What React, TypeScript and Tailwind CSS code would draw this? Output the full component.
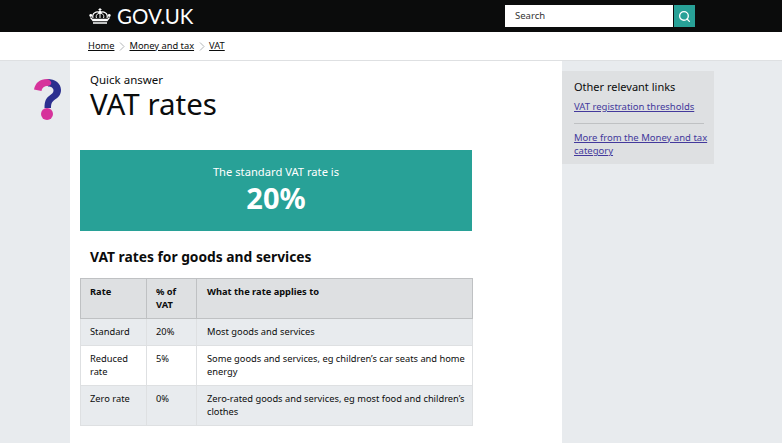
import { Search } from "lucide-react"

const rows = [
  { rate: "Standard", pct: "20%", text: "Most goods and services", shaded: true, h: "h-[27px]" },
  { rate: "Reduced rate", pct: "5%", text: "Some goods and services, eg children’s car seats and home energy", shaded: false, h: "h-[40px]" },
  { rate: "Zero rate", pct: "0%", text: "Zero-rated goods and services, eg most food and children’s clothes", shaded: true, h: "h-[40px]" },
]

function Crown() {
  return (
    <svg width="22" height="16" viewBox="0 0 44 32" fill="none" stroke="white" strokeWidth="2">
      <path d="M22 0v6M19 3h6" strokeWidth="2" />
      <path d="M8 20C5 10 16 5 22 10c6-5 17-0 14 10" strokeWidth="2.400" />
      <path d="M15 20c-2-5 1-9 7-10 6 1 9 5 7 10M22 10v10" strokeWidth="2" />
      <circle cx="3.500" cy="15" r="2.800" fill="white" stroke="none" />
      <circle cx="40.500" cy="15" r="2.800" fill="white" stroke="none" />
      <circle cx="22" cy="8" r="3" fill="white" stroke="none" />
      <path d="M3 19l5 6M41 19l-5 6" strokeWidth="2.400" />
      <path d="M7 21.500h30v5H7z" fill="white" stroke="none" />
      <path d="M8 28.500h28v3H8z" fill="white" stroke="none" />
    </svg>
  )
}

function QuestionMark() {
  return (
    <svg width="27" height="41" viewBox="0 0 27 41">
      <path d="M13 0C21.500 0 27 4.500 27 11c0 5-3 7.500-6 9.500-2.600 1.800-4 3.500-4 8.500h-6.500c0-7 1.600-10 5.200-12.500 2.300-1.600 3.800-2.800 3.800-5 0-2.500-2.300-4-5.500-4z" fill="#2b2f8f" />
      <path d="M13 0C6 0 1.500 3.500 0 10.500l7.500 1.500C8.300 8.500 10 7 14 7 19 6 18 1 13 0z" fill="#d6339b" />
      <circle cx="13" cy="35" r="6" fill="#d6339b" />
    </svg>
  )
}

function Crumb({ label, last }: { label: string; last?: boolean }) {
  return (
    <>
      <a className="text-[#0b0c0c] underline">{label}</a>
      {!last && (
        <svg width="6" height="9" viewBox="0 0 6 9" fill="none" stroke="#b1b4b6" strokeWidth="1" className="mx-[4.500px] mt-[2px]">
          <path d="M1 .5l4 4-4 4" />
        </svg>
      )}
    </>
  )
}

export default function App() {
  return (
    <div className="h-[443px] w-[782px] overflow-hidden bg-[#e8ebee] font-['Noto_Sans',sans-serif] text-[#0b0c0c]">
      <header className="flex h-[32px] items-center justify-between bg-[#0b0c0c] pl-[89px] pr-[87px]">
        <div className="flex items-center gap-[6px]">
          <Crown />
          <span className="font-['Lato',sans-serif] text-[20.500px] leading-none text-white">GOV.UK</span>
        </div>
        <div className="flex h-[22px]">
          <div className="flex w-[168px] items-center bg-white pl-[10px] text-[9.500px] text-[#333]">Search</div>
          <button className="ml-[1px] flex w-[21px] items-center justify-center bg-[#28a197]">
            <Search size={13} color="white" strokeWidth={2.5} />
          </button>
        </div>
      </header>

      <nav className="flex h-[29px] items-center border-b border-[#dee0e2] bg-white pb-[1px] pl-[88px] text-[9.300px]">
        <Crumb label="Home" />
        <Crumb label="Money and tax" />
        <Crumb label="VAT" last />
      </nav>

      <div className="flex">
        <div className="flex w-[70px] justify-end pr-[9px] pt-[18px]">
          <QuestionMark />
        </div>
        <main className="h-[383px] w-[492px] bg-white pl-[10px]">
          <p className="pl-[10px] pt-[11px] text-[11.500px] leading-[15px]">Quick answer</p>
          <h1 className="pl-[10px] text-[29.500px] leading-[33px]">VAT rates</h1>
          <div className="mt-[30px] flex h-[81px] w-[392px] flex-col items-center justify-center bg-[#28a197] pb-[2px] text-white">
            <p className="text-[11.200px] leading-[16px]">The standard VAT rate is</p>
            <p className="text-[29px] font-bold leading-[36px]">20%</p>
          </div>
          <h2 className="mt-[16px] pl-[10px] text-[13.800px] font-bold leading-[20px]">VAT rates for goods and services</h2>
          <table className="mt-[11px] w-[393px] table-fixed border-collapse text-[9.300px] leading-[13px]">
            <thead>
              <tr className="h-[40px] bg-[#dee0e2] align-top font-bold">
                <th className="w-[66px] border border-[#bfc1c3] pl-[9px] pt-[6px] text-left">Rate</th>
                <th className="w-[50px] border border-[#bfc1c3] pl-[9px] pr-[12px] pt-[6px] text-left">% of VAT</th>
                <th className="border border-[#bfc1c3] pl-[10px] pt-[6px] text-left">What the rate applies to</th>
              </tr>
            </thead>
            <tbody>
              {rows.map((r) => (
                <tr key={r.rate} className={`${r.h} align-top ${r.shaded ? "bg-[#e8ebee]" : "bg-white"}`}>
                  <td className="border border-[#dee0e2] pl-[9px] pt-[6px]">{r.rate}</td>
                  <td className="border border-[#dee0e2] pl-[9px] pt-[6px]">{r.pct}</td>
                  <td className="border border-[#dee0e2] pl-[10px] pr-[1px] pt-[6px]">{r.text}</td>
                </tr>
              ))}
            </tbody>
          </table>
        </main>
        <aside className="mt-[10px] h-[93px] w-[152px] bg-[#dee0e2] pl-[12px] pr-[5px] pt-[8px]">
          <h3 className="text-[11px] leading-[16px]">Other relevant links</h3>
          <a className="mt-[5px] block text-[9.500px] leading-[13px] text-[#43399c] underline">VAT registration thresholds</a>
          <hr className="mt-[10px] w-[130px] border-[#bfc1c3]" />
          <a className="mt-[7px] block text-[9.500px] leading-[13px] text-[#43399c] underline">More from the Money and tax category</a>
        </aside>
      </div>
    </div>
  )
}
